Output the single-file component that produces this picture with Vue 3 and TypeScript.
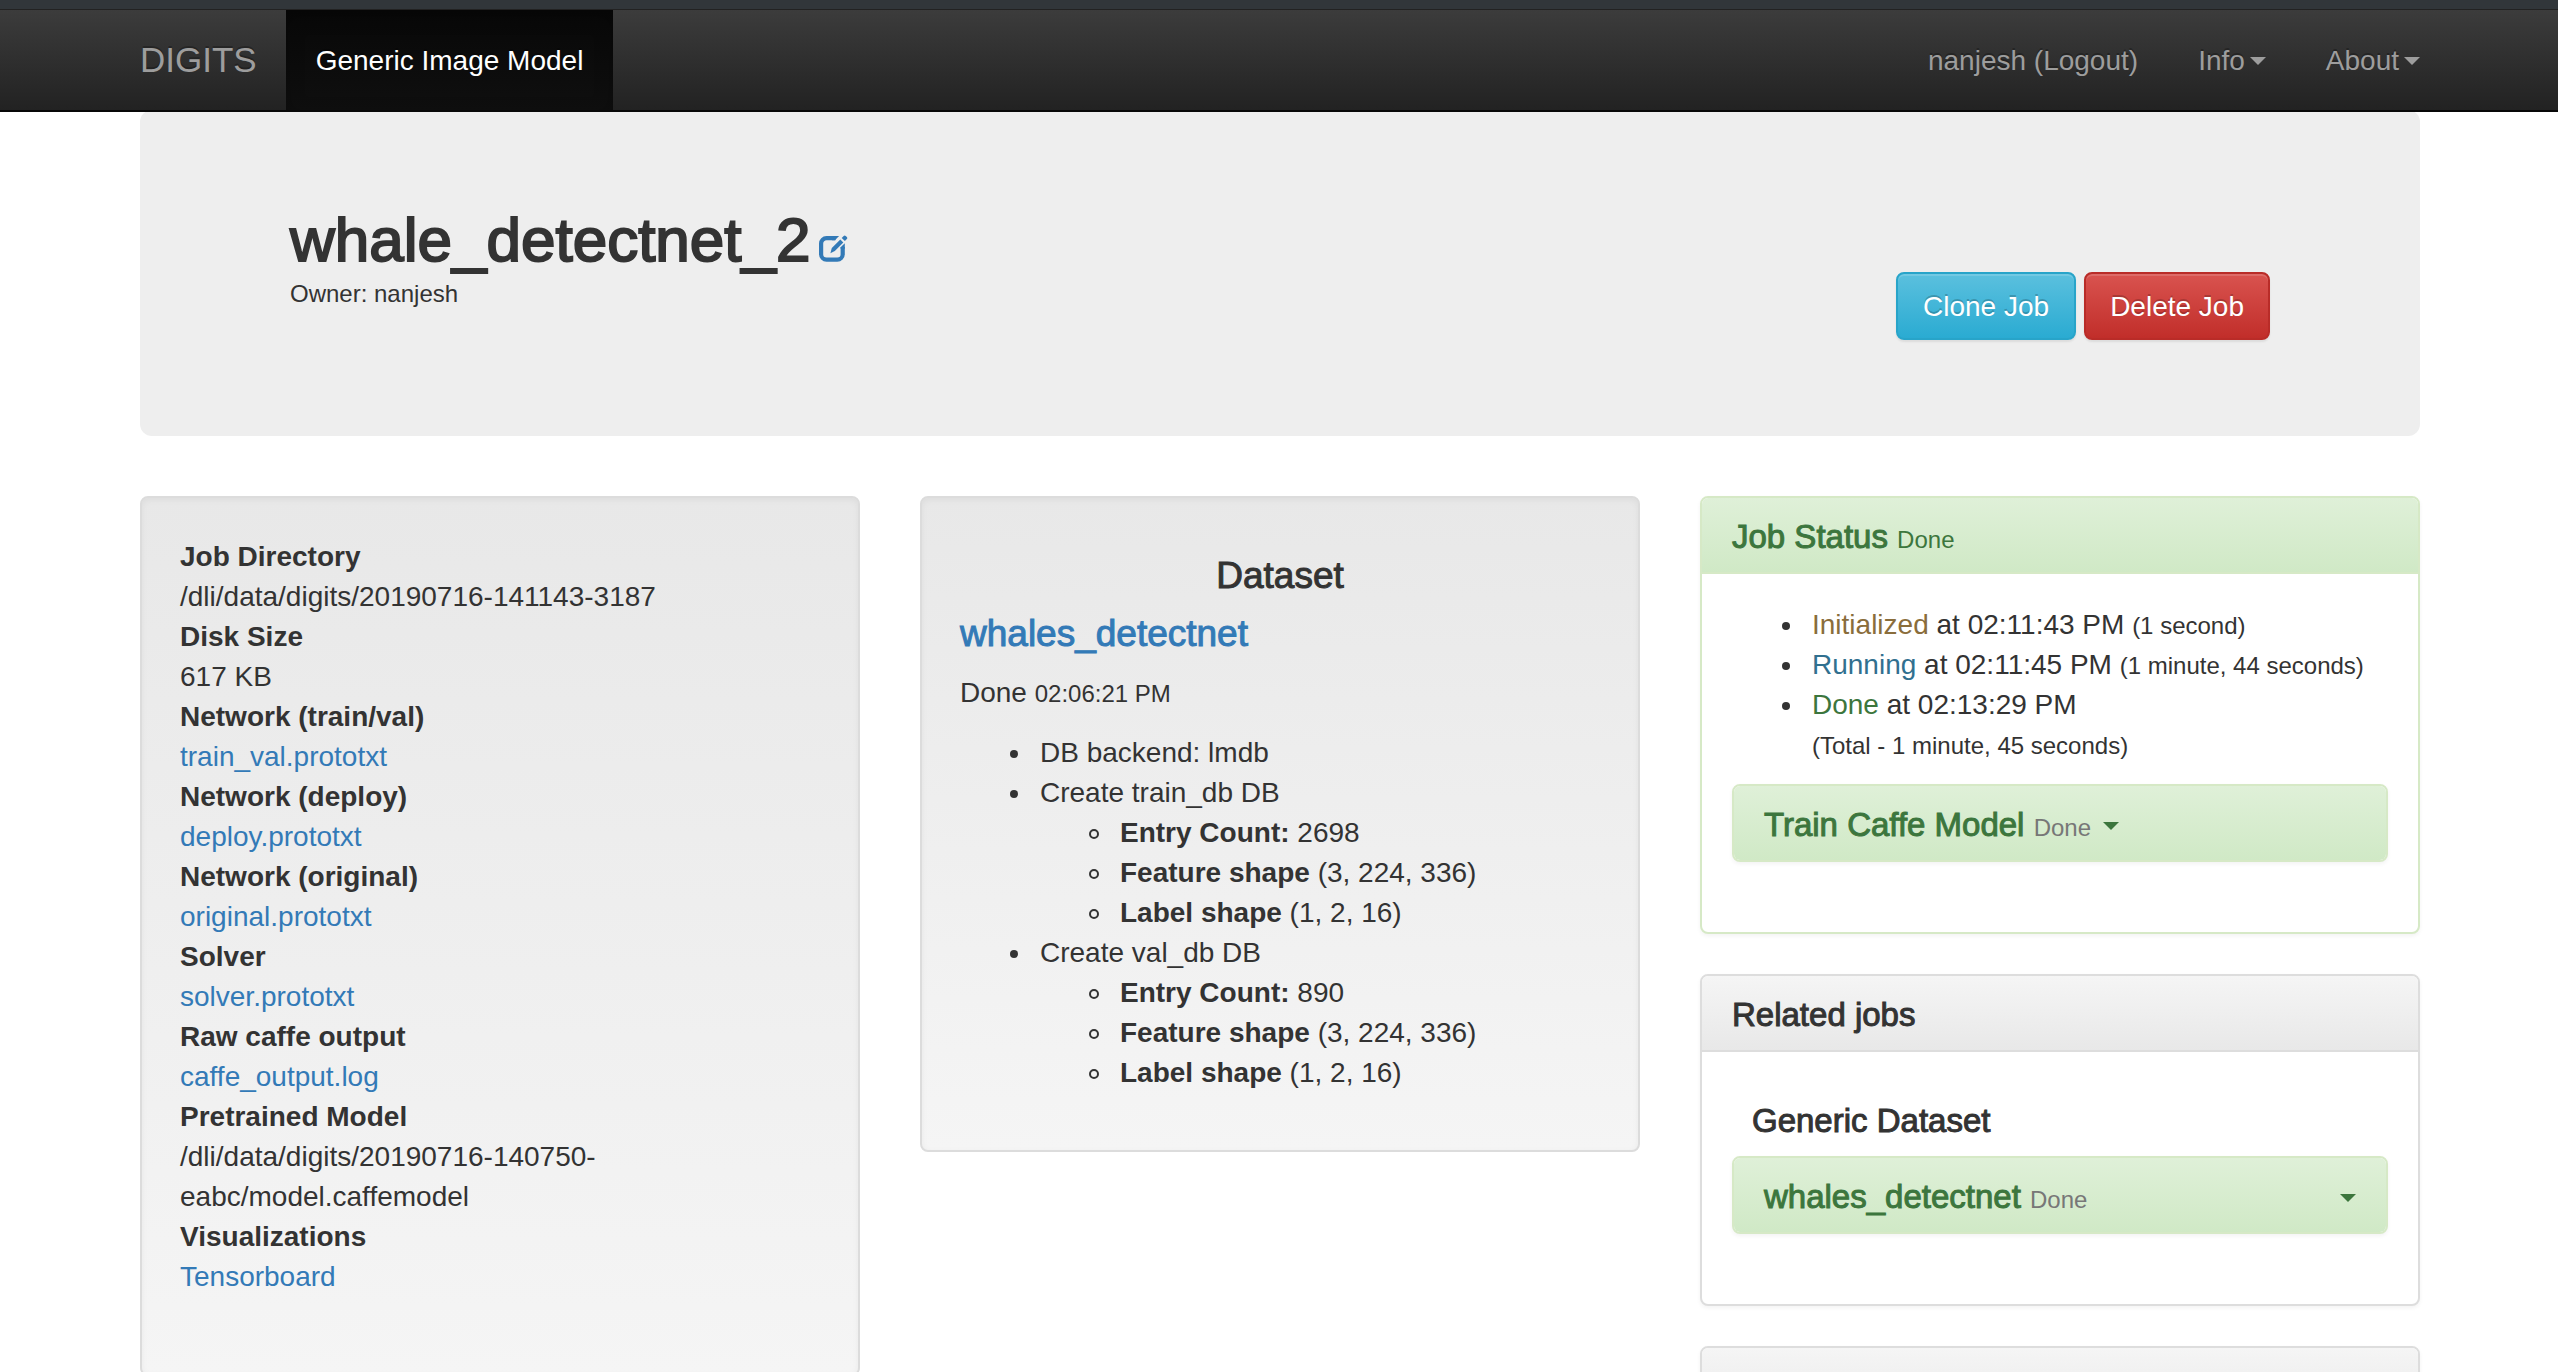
<script setup lang="ts">
interface Detail {
  label: string
  parts: string[]
  link?: boolean
}

interface DbTask {
  name: string
  entries: { label: string; value: string }[]
}

interface StatusEvent {
  state: string
  kind: 'warning' | 'info' | 'success'
  time: string
  note?: string
}

const details: Detail[] = [
  { label: 'Job Directory', parts: ['/dli/data/digits/20190716-141143-3187'] },
  { label: 'Disk Size', parts: ['617 KB'] },
  { label: 'Network (train/val)', parts: ['train_val.prototxt'], link: true },
  { label: 'Network (deploy)', parts: ['deploy.prototxt'], link: true },
  { label: 'Network (original)', parts: ['original.prototxt'], link: true },
  { label: 'Solver', parts: ['solver.prototxt'], link: true },
  { label: 'Raw caffe output', parts: ['caffe_output.log'], link: true },
  { label: 'Pretrained Model', parts: ['/dli/data/digits/20190716-140750-', 'eabc/model.caffemodel'] },
  { label: 'Visualizations', parts: ['Tensorboard'], link: true },
]

const tasks: DbTask[] = [
  {
    name: 'Create train_db DB',
    entries: [
      { label: 'Entry Count:', value: '2698' },
      { label: 'Feature shape', value: '(3, 224, 336)' },
      { label: 'Label shape', value: '(1, 2, 16)' },
    ],
  },
  {
    name: 'Create val_db DB',
    entries: [
      { label: 'Entry Count:', value: '890' },
      { label: 'Feature shape', value: '(3, 224, 336)' },
      { label: 'Label shape', value: '(1, 2, 16)' },
    ],
  },
]

const events: StatusEvent[] = [
  { state: 'Initialized', kind: 'warning', time: '02:11:43 PM', note: '(1 second)' },
  { state: 'Running', kind: 'info', time: '02:11:45 PM', note: '(1 minute, 44 seconds)' },
  { state: 'Done', kind: 'success', time: '02:13:29 PM' },
]
</script>

<template>
  <div class="page">
    <header class="topbar">
      <nav class="container nav">
        <a class="brand" href="#">DIGITS</a>
        <a class="nav-link active" href="#">Generic Image Model</a>
        <div class="nav-right">
          <a class="nav-link" href="#">nanjesh (Logout)</a>
          <a class="nav-link" href="#">Info<span class="caret"></span></a>
          <a class="nav-link last" href="#">About<span class="caret"></span></a>
        </div>
      </nav>
    </header>

    <main class="container">
      <section class="jumbotron">
        <div>
          <h1>
            <span>whale_detectnet_2</span>
            <a class="edit" href="#" aria-label="Edit name">
              <svg viewBox="0 0 29 28" width="29" height="28" aria-hidden="true">
                <path
                  d="M16.5 3.2H7.5a5.4 5.4 0 0 0-5.4 5.4v10.6a5.4 5.4 0 0 0 5.4 5.4h10.8a5.4 5.4 0 0 0 5.4-5.4V12"
                  fill="none" stroke="currentColor" stroke-width="4.2"
                />
                <path d="M15.5 1h4.6l-4.2 4.3h-3zM25.8 8.2v5.5h-4.2v-1.4z" fill="currentColor" />
                <path d="M11.4 18.2l1.4-5.1 8.5-8.6 3 3-8.5 8.5z" fill="currentColor" />
                <path d="M22.7 3l2-2.1q1-.9 2 0l1.2 1.2q.9 1 0 2l-2.1 2z" fill="currentColor" />
              </svg>
            </a>
          </h1>
          <p class="owner">Owner: nanjesh</p>
        </div>
        <div class="actions">
          <button type="button" class="btn btn-info">Clone Job</button>
          <button type="button" class="btn btn-danger">Delete Job</button>
        </div>
      </section>

      <div class="columns">
        <section class="well">
          <dl>
            <template v-for="d in details" :key="d.label">
              <dt>{{ d.label }}</dt>
              <dd>
                <a v-if="d.link" href="#">{{ d.parts[0] }}</a>
                <template v-else>
                  <span v-for="p in d.parts" :key="p" class="part">{{ p }}</span>
                </template>
              </dd>
            </template>
          </dl>
        </section>

        <section class="well">
          <h2 class="medium heading centered">Dataset</h2>
          <h3 class="medium heading"><a href="#">whales_detectnet</a></h3>
          <p>Done <small>02:06:21 PM</small></p>
          <ul class="tasks">
            <li>DB backend: lmdb</li>
            <li v-for="t in tasks" :key="t.name">
              {{ t.name }}
              <ul>
                <li v-for="e in t.entries" :key="e.label"><b>{{ e.label }}</b> {{ e.value }}</li>
              </ul>
            </li>
          </ul>
        </section>

        <div class="side">
          <section class="panel success">
            <h2 class="panel-heading"><span class="medium">Job Status</span>&nbsp;<small>Done</small></h2>
            <div class="panel-body">
              <ul>
                <li v-for="e in events" :key="e.state">
                  <span :class="e.kind">{{ e.state }}</span> at {{ e.time }}
                  <small v-if="e.note">{{ e.note }}</small>
                </li>
              </ul>
              <p class="total"><small>(Total - 1 minute, 45 seconds)</small></p>
              <section class="panel success inner">
                <h3 class="panel-heading">
                  <a class="toggle" href="#">
                    <span class="medium">Train Caffe Model</span>&nbsp;<small class="muted">Done</small>
                    <span class="caret spaced"></span>
                  </a>
                </h3>
              </section>
            </div>
          </section>

          <section class="panel">
            <h2 class="panel-heading"><span class="medium">Related jobs</span></h2>
            <div class="panel-body">
              <h3 class="group medium">Generic Dataset</h3>
              <section class="panel success inner">
                <h4 class="panel-heading">
                  <a class="toggle" href="#">
                    <span class="medium">whales_detectnet</span>&nbsp;<small class="muted">Done</small>
                    <span class="caret far"></span>
                  </a>
                </h4>
              </section>
            </div>
          </section>

          <section class="panel">
            <div class="panel-heading blank"></div>
          </section>
        </div>
      </div>
    </main>
  </div>
</template>

<style>
body {
  background: #fff;
}
</style>

<style scoped>
.page {
  height: 100vh;
  overflow-y: auto;
  scrollbar-width: none;
  font: 28px/40px "Liberation Sans", Arial, sans-serif;
  color: #333;
}
.page *,
.page *::before {
  box-sizing: border-box;
}
h1, h2, h3, h4, p, ul, dl, dd {
  margin: 0;
  font-weight: 400;
}
a {
  color: #337ab7;
  text-decoration: none;
}
small {
  font-size: 24px;
  line-height: 1;
}
/* in-between weight for headings, since the family only has 400 and 700 */
.medium {
  -webkit-text-stroke: 1px currentColor;
}
.container {
  padding: 0 138px 0 140px;
}

.topbar {
  position: relative;
  z-index: 1;
  border-top: 9px solid #31363a;
  border-bottom: 2px solid #080808;
  background: linear-gradient(#3c3c3c, #222);
  box-shadow: inset 0 1px #222;
}
.nav {
  display: flex;
  padding-top: 1px;
}
.brand,
.nav-link {
  display: flex;
  align-items: center;
  height: 100px;
  padding: 2px 30px 0;
  color: #9d9d9d;
  text-shadow: 0 -2px 0 rgba(0, 0, 0, 0.25);
}
.brand {
  padding: 0 29px 0 0;
  font-size: 35px;
}
.nav-link.active {
  color: #fff;
  background: linear-gradient(#080808, #0f0f0f);
  box-shadow: inset 0 6px 18px rgba(0, 0, 0, 0.25);
}
.nav-link.last {
  padding-right: 0;
}
.nav-right {
  display: flex;
  margin-left: auto;
}
.caret {
  display: inline-block;
  margin-left: 5px;
  border: 8px solid transparent;
  border-top-color: currentColor;
  border-bottom: 0;
  vertical-align: middle;
}

.jumbotron {
  display: flex;
  justify-content: space-between;
  align-items: flex-start;
  margin-top: -2px;
  padding: 96px 150px;
  border-radius: 12px;
  background: #eee;
}
h1 {
  display: flex;
  align-items: center;
  gap: 8px;
  font-size: 62px;
  line-height: 68px;
  -webkit-text-stroke: 2px currentColor;
}
.edit {
  display: flex;
  padding-top: 18px;
}
.owner {
  font-size: 24px;
}
.actions {
  display: flex;
  gap: 8px;
  margin-top: 66px;
}
.btn {
  height: 68px;
  padding: 1px 24px 0;
  border: 2px solid;
  border-radius: 8px;
  font: inherit;
  color: #fff;
  text-shadow: 0 -2px 0 rgba(0, 0, 0, 0.2);
  box-shadow: inset 0 2px 0 rgba(255, 255, 255, 0.15), 0 2px 2px rgba(0, 0, 0, 0.075);
}
.btn-info {
  padding: 1px 25px 0;
  border-color: #28a4c9;
  background: linear-gradient(#5bc0de, #2aabd2);
}
.btn-danger {
  border-color: #b92c28;
  background: linear-gradient(#d9534f, #c12e2a);
}

.columns {
  display: grid;
  grid-template-columns: repeat(3, minmax(0, 1fr));
  gap: 60px;
  align-items: start;
  margin-top: 60px;
}
.well {
  padding: 39px 38px 37px;
  border: 2px solid #dcdcdc;
  border-radius: 8px;
  background: linear-gradient(#e8e8e8, #f5f5f5);
  box-shadow: inset 0 2px 6px rgba(0, 0, 0, 0.05);
}
dl {
  margin-bottom: 40px;
}
dt {
  font-weight: 700;
}
.part {
  display: block;
  white-space: nowrap;
}
.heading {
  margin-bottom: 20px;
  font-size: 37px;
  line-height: 38px;
}
.centered {
  margin-top: 20px;
  text-align: center;
}
ul {
  padding-left: 80px;
  list-style: none;
}
li::before {
  content: "";
  display: inline-block;
  width: 8px;
  height: 8px;
  margin: 0 22px 0 -30px;
  border-radius: 50%;
  background: currentColor;
  vertical-align: 4px;
}
li li::before {
  width: 10px;
  height: 10px;
  margin: 0 21px 0 -31px;
  border: 2px solid currentColor;
  background: none;
  vertical-align: 3px;
}
.tasks {
  margin: 20px 0;
}

.panel {
  margin-bottom: 40px;
  border: 2px solid #ddd;
  border-radius: 8px;
  background: #fff;
  box-shadow: 0 2px 4px rgba(0, 0, 0, 0.05);
}
.panel-heading {
  padding: 22px 30px 18px;
  border-bottom: 2px solid #ddd;
  border-radius: 6px 6px 0 0;
  background: linear-gradient(#f5f5f5, #e8e8e8);
  font-size: 33px;
  line-height: 34px;
}
.blank {
  height: 76px;
}
.panel.success {
  border-color: #d6e9c6;
}
.success > .panel-heading {
  border-color: #d6e9c6;
  color: #3c763d;
  background: linear-gradient(#dff0d8, #d0e9c6);
}
.inner > .panel-heading {
  border-bottom: 0;
  border-radius: 6px;
}
.panel-body {
  padding: 30px;
}
.panel-body > ul {
  padding-top: 1px;
}
.total {
  padding-left: 80px;
  margin-bottom: 19px;
}
.toggle {
  display: flex;
  align-items: baseline;
  color: inherit;
}
.toggle .caret {
  align-self: center;
  margin-top: 2px;
}
.toggle .spaced {
  margin-left: 12px;
}
.toggle .far {
  margin-left: auto;
}
.muted {
  color: #777;
}
.warning {
  color: #8a6d3b;
}
.info {
  color: #31708f;
}
span.success {
  color: #3c763d;
}
.group {
  margin: 22px 20px 18px;
  font-size: 33px;
  line-height: 34px;
}
</style>
